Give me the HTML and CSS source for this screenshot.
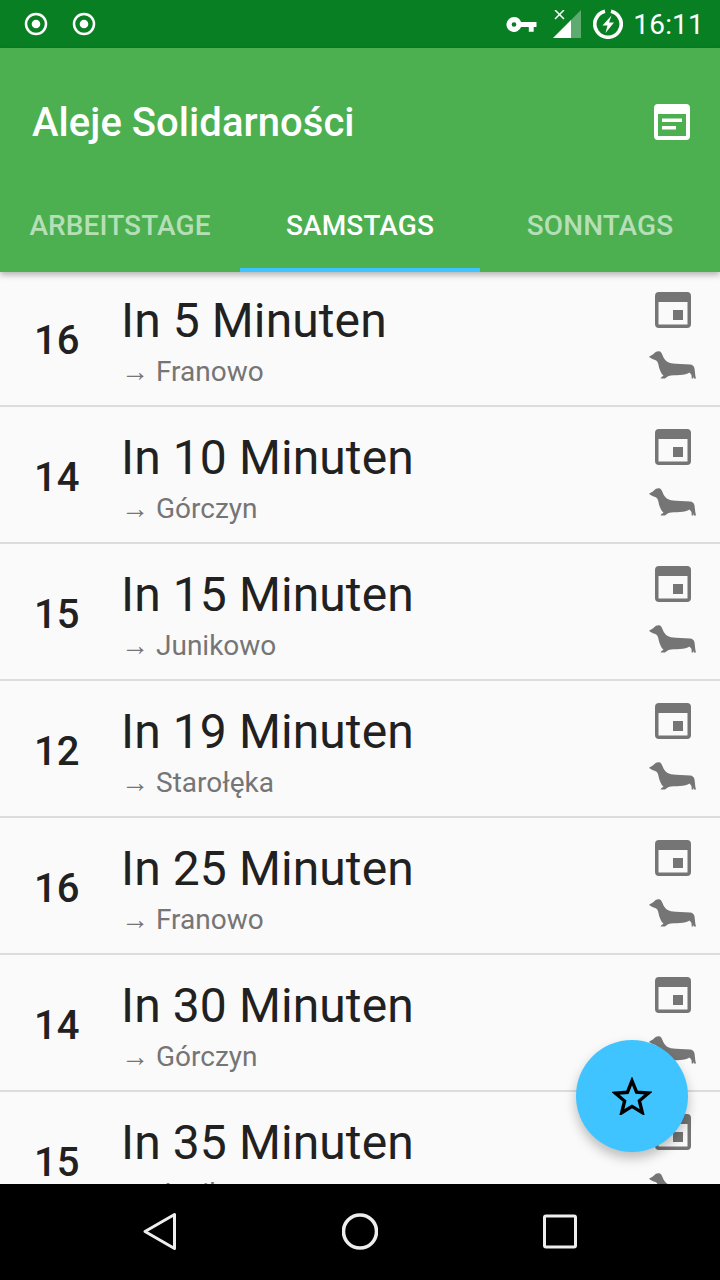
FILE: index.html
```html
<!DOCTYPE html>
<html lang="en">
<head>
  <meta charset="UTF-8">
  <meta name="viewport" content="width=device-width, initial-scale=1">
  <title>Aleje Solidarności</title>
  <link rel="stylesheet" href="styles.css">
</head>

<body>

<svg class="defs" width="0" height="0">
  <symbol id="cal" viewBox="0 0 36 36">
    <path fill-rule="evenodd" d="M4 0h28a4 4 0 0 1 4 4v28a4 4 0 0 1-4 4H4a4 4 0 0 1-4-4V4a4 4 0 0 1 4-4zM3.500 10v22.500h29V10zM18 18h10v10H18z"/>
  </symbol>
  <symbol id="dog" viewBox="0 0 48 30">
    <path d="M0 6.700C3 5.500 5 3.500 7 1.800C9 .8 11 1 12.300 2.700C13.500 4.500 14 7 15.500 9C17 11 19 12.700 22 13.200C28 14 35 14 41 14.500C43.500 14.700 45 16 45.500 18.500C46 21.500 46 25 47 28.500H45L44.500 26.500L44.200 28.500H42.700L42.500 25L40.500 22.500C38.500 24.300 35 24.800 31 25C27 25.300 22.500 25.300 19.500 26C18 26.800 17 27.800 16 28.500H11.500L12.500 27L14.500 25.800C12 23.500 10 18.500 9.500 15C9 12.300 8 10.300 5.500 9.700C3.500 9.200 1.500 8 0 6.700z"/>
  </symbol>
</svg>

<div class="app">

  <!-- status bar -->
  <div class="status-bar">
    <div class="status-left">
      <svg class="dot-icon" viewBox="0 0 24 24"><circle cx="12" cy="12" r="10" fill="none" stroke="#fff" stroke-width="2.500"/><circle cx="12" cy="12" r="4.300" fill="#fff"/></svg>
      <svg class="dot-icon" viewBox="0 0 24 24"><circle cx="12" cy="12" r="10" fill="none" stroke="#fff" stroke-width="2.500"/><circle cx="12" cy="12" r="4.300" fill="#fff"/></svg>
    </div>
    <div class="status-right">
      <svg class="key-icon" viewBox="0 0 32 16"><path fill="#fff" fill-rule="evenodd" d="M8 0a8 8 0 0 1 7.500 5.200H32v5.400h-3v5h-5.200v-5h-8.300A8 8 0 1 1 8 0zm0 5.500a2.500 2.500 0 1 0 0 5 2.500 2.500 0 0 0 0-5z"/></svg>
      <svg class="signal-icon" viewBox="0 0 28 28"><path fill="#fff" fill-opacity=".35" d="M28 0v28H18V10z"/><path fill="#fff" d="M18 10v18H0z"/><path stroke="#fff" stroke-width="1.500" d="M2 0l9 9M11 0l-9 9"/></svg>
      <svg class="battery-icon" viewBox="0 0 30 30"><path fill="none" stroke="#fff" stroke-width="3.600" d="M18 2.200a13.200 13.200 0 1 1-6 0"/><path fill="#fff" d="M18.500 6.500l-9 10h5L12.500 24l8.500-10.500h-5z"/></svg>
      <span class="clock">16:11</span>
    </div>
  </div>

  <!-- toolbar + tabs -->
  <div class="header">
    <div class="toolbar">
      <span class="title">Aleje Solidarności</span>
      <svg class="note-icon" viewBox="0 0 36 36"><path fill="#fff" fill-rule="evenodd" d="M4 0h28a4 4 0 0 1 4 4v28a4 4 0 0 1-4 4H4a4 4 0 0 1-4-4V4a4 4 0 0 1 4-4zM4 10v22h28V10zM8 14.500h20v3.500H8zM8 22h14v3.500H8z"/></svg>
    </div>
    <div class="tabs">
      <div class="tab">ARBEITSTAGE</div>
      <div class="tab active">SAMSTAGS</div>
      <div class="tab">SONNTAGS</div>
    </div>
  </div>

  <!-- departures -->
  <div class="list">
    <div class="rows">
      <div class="row">
        <div class="line">16</div>
        <div class="info"><div class="when">In 5 Minuten</div><div class="dest"><span class="arrow">→</span>Franowo</div></div>
        <div class="icons"><svg class="cal"><use href="#cal"/></svg><svg class="dog"><use href="#dog"/></svg></div>
      </div>
      <div class="row">
        <div class="line">14</div>
        <div class="info"><div class="when">In 10 Minuten</div><div class="dest"><span class="arrow">→</span>Górczyn</div></div>
        <div class="icons"><svg class="cal"><use href="#cal"/></svg><svg class="dog"><use href="#dog"/></svg></div>
      </div>
      <div class="row">
        <div class="line">15</div>
        <div class="info"><div class="when">In 15 Minuten</div><div class="dest"><span class="arrow">→</span>Junikowo</div></div>
        <div class="icons"><svg class="cal"><use href="#cal"/></svg><svg class="dog"><use href="#dog"/></svg></div>
      </div>
      <div class="row">
        <div class="line">12</div>
        <div class="info"><div class="when">In 19 Minuten</div><div class="dest"><span class="arrow">→</span>Starołęka</div></div>
        <div class="icons"><svg class="cal"><use href="#cal"/></svg><svg class="dog"><use href="#dog"/></svg></div>
      </div>
      <div class="row">
        <div class="line">16</div>
        <div class="info"><div class="when">In 25 Minuten</div><div class="dest"><span class="arrow">→</span>Franowo</div></div>
        <div class="icons"><svg class="cal"><use href="#cal"/></svg><svg class="dog"><use href="#dog"/></svg></div>
      </div>
      <div class="row">
        <div class="line">14</div>
        <div class="info"><div class="when">In 30 Minuten</div><div class="dest"><span class="arrow">→</span>Górczyn</div></div>
        <div class="icons"><svg class="cal"><use href="#cal"/></svg><svg class="dog"><use href="#dog"/></svg></div>
      </div>
      <div class="row">
        <div class="line">15</div>
        <div class="info"><div class="when">In 35 Minuten</div><div class="dest"><span class="arrow">→</span>Junikowo</div></div>
        <div class="icons"><svg class="cal"><use href="#cal"/></svg><svg class="dog"><use href="#dog"/></svg></div>
      </div>
    </div>

    <div class="fab">
      <svg viewBox="0 0 40 38"><path fill="none" stroke="#000" stroke-width="3.400" d="M20 3.800l4.600 11.300 12 .9-9.200 7.800 2.900 11.800L20 29.400 9.700 35.800l2.900-11.800-9.200-7.800 12-.9z"/></svg>
    </div>
  </div>

  <!-- nav bar -->
  <div class="nav-bar">
    <svg class="nav-icon" viewBox="0 0 36 40"><path fill="none" stroke="#eee" stroke-width="3" stroke-linejoin="round" d="M3 19.500L32.500 2.500v34z"/></svg>
    <svg class="nav-icon" viewBox="0 0 36 40"><circle cx="18" cy="19.500" r="16.500" fill="none" stroke="#eee" stroke-width="3.500"/></svg>
    <svg class="nav-icon" viewBox="0 0 36 40"><rect x="2.500" y="4" width="31" height="31" rx="1.500" fill="none" stroke="#eee" stroke-width="3"/></svg>
  </div>

</div>

</body>
</html>
```

FILE: styles.css
```css
body {
  font-family: 'Roboto', sans-serif;
  margin: 0;
  padding: 0;
  background: #fafafa;
}
.defs {
  display: block;
  height: 0;
}
.app {
  width: 720px;
  height: 1280px;
  display: flex;
  flex-direction: column;
  overflow: hidden;
}
.status-bar {
  height: 48px;
  flex: none;
  background: #087f23;
  color: white;
  display: flex;
  align-items: center;
  justify-content: space-between;
  padding: 0 16px 0 24px;
}
.status-left {
  display: flex;
  gap: 24px;
}
.dot-icon {
  width: 24px;
  height: 24px;
  display: block;
}
.status-right {
  display: flex;
  align-items: center;
}
.key-icon {
  width: 31px;
  height: 15px;
  margin-right: 16px;
}
.signal-icon {
  width: 28px;
  height: 28px;
  margin-right: 12px;
}
.battery-icon {
  width: 30px;
  height: 30px;
  margin-right: 10px;
}
.clock {
  font-size: 28px;
  letter-spacing: 0.2px;
}
.header {
  flex: none;
  height: 224px;
  background: #4caf50;
  box-shadow: 0 3px 6px rgba(0,0,0,0.28);
  position: relative;
  z-index: 2;
  display: flex;
  flex-direction: column;
}
.toolbar {
  height: 128px;
  display: flex;
  align-items: center;
  justify-content: space-between;
  padding: 20px 30px 0 32px;
  box-sizing: border-box;
}
.title {
  color: white;
  font-size: 40px;
  font-weight: 500;
  letter-spacing: 0.05px;
}
.note-icon {
  width: 36px;
  height: 36px;
}
.tabs {
  flex: 1;
  display: flex;
}
.tab {
  width: 240px;
  display: flex;
  align-items: center;
  justify-content: center;
  font-size: 28px;
  font-weight: 500;
  letter-spacing: 0.1px;
  color: rgba(255,255,255,0.6);
  box-sizing: border-box;
  padding-top: 6px;
  border-bottom: 4px solid transparent;
}
.tab.active {
  color: white;
  border-bottom-color: #40c4ff;
}
.list {
  flex: 1;
  min-height: 0;
  position: relative;
  overflow: hidden;
}
.rows {
  margin-top: -2px;
}
.row {
  height: 137px;
  box-sizing: border-box;
  border-bottom: 2px solid #dcdcdc;
  display: flex;
  align-items: center;
}
.line {
  width: 122px;
  flex: none;
  box-sizing: border-box;
  padding: 5px 0 0 34px;
  font-size: 40px;
  font-weight: 500;
  color: #212121;
}
.info {
  flex: 1;
  margin-left: -1px;
  padding-top: 1px;
}
.when {
  font-size: 48px;
  line-height: 67px;
  letter-spacing: 0.1px;
  color: #212121;
}
.dest {
  font-size: 28px;
  line-height: 36px;
  color: #757575;
}
.arrow {
  margin-right: 7px;
}
.icons {
  width: 48px;
  margin-right: 23px;
  padding-bottom: 4px;
  display: flex;
  flex-direction: column;
  align-items: center;
  gap: 22px;
  fill: #757575;
}
.cal {
  width: 36px;
  height: 36px;
}
.dog {
  width: 48px;
  height: 30px;
}
.fab {
  position: absolute;
  right: 32px;
  bottom: 32px;
  width: 112px;
  height: 112px;
  border-radius: 50%;
  background: #40c4ff;
  box-shadow: 0 6px 12px rgba(0,0,0,0.25);
  display: flex;
  align-items: center;
  justify-content: center;
}
.fab svg {
  width: 40px;
  height: 38px;
}
.nav-bar {
  flex: none;
  height: 96px;
  background: black;
  display: flex;
  justify-content: space-between;
  align-items: center;
  padding: 0 142px;
}
.nav-icon {
  width: 36px;
  height: 40px;
}
```
